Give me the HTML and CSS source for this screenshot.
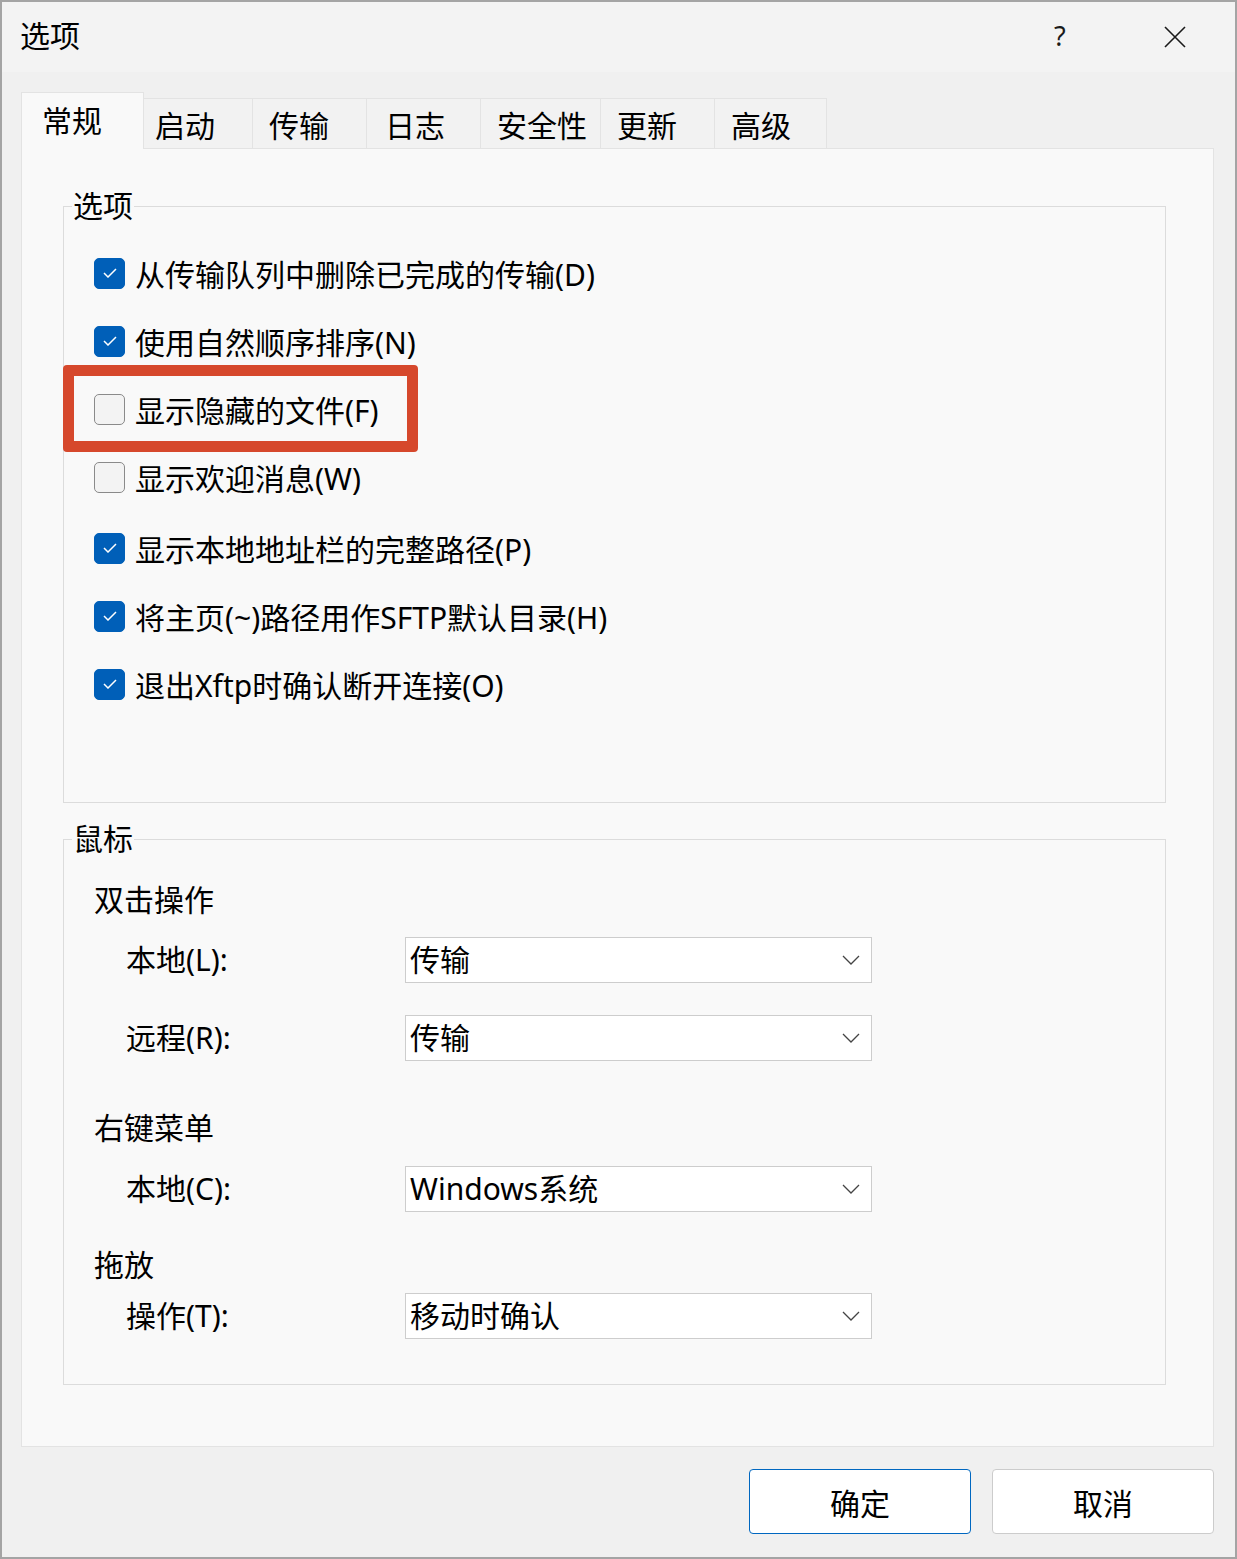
FILE: index.html
```html
<!DOCTYPE html>
<html lang="zh-CN">
<head>
<meta charset="utf-8">
<title>选项</title>
<link rel="stylesheet" href="styles.css">
</head>
<body>
<div class="window">
  <div class="titlebar">
    <span class="title">选项</span>
    <span class="help">?</span>
    <svg class="close" width="22" height="22" viewBox="0 0 22 22"><path d="M1 1L21 21M21 1L1 21" stroke="#1a1a1a" stroke-width="1.6" fill="none"/></svg>
  </div>
  <div class="content">
    <div class="tabs">
      <div class="tab active t1">常规</div>
      <div class="tab t2">启动</div>
      <div class="tab t3">传输</div>
      <div class="tab t4">日志</div>
      <div class="tab t5">安全性</div>
      <div class="tab t6">更新</div>
      <div class="tab t7">高级</div>
    </div>
    <div class="panel">
      <fieldset class="group options">
        <legend>选项</legend>
        <div class="row"><span class="cb on"><svg width="14" height="10" viewBox="0 0 14 10"><path d="M1 5L5 9L13 1" stroke="#fff" stroke-width="1.5" fill="none"/></svg></span><span>从传输队列中删除已完成的传输(D)</span></div>
        <div class="row"><span class="cb on"><svg width="14" height="10" viewBox="0 0 14 10"><path d="M1 5L5 9L13 1" stroke="#fff" stroke-width="1.5" fill="none"/></svg></span><span>使用自然顺序排序(N)</span></div>
        <div class="row marked"><span class="cb"></span><span>显示隐藏的文件(F)</span><div class="highlight"></div></div>
        <div class="row"><span class="cb"></span><span>显示欢迎消息(W)</span></div>
        <div class="row shift"><span class="cb on"><svg width="14" height="10" viewBox="0 0 14 10"><path d="M1 5L5 9L13 1" stroke="#fff" stroke-width="1.5" fill="none"/></svg></span><span>显示本地地址栏的完整路径(P)</span></div>
        <div class="row"><span class="cb on"><svg width="14" height="10" viewBox="0 0 14 10"><path d="M1 5L5 9L13 1" stroke="#fff" stroke-width="1.5" fill="none"/></svg></span><span>将主页(~)路径用作SFTP默认目录(H)</span></div>
        <div class="row"><span class="cb on"><svg width="14" height="10" viewBox="0 0 14 10"><path d="M1 5L5 9L13 1" stroke="#fff" stroke-width="1.5" fill="none"/></svg></span><span>退出Xftp时确认断开连接(O)</span></div>
      </fieldset>
      <fieldset class="group mouse">
        <legend>鼠标</legend>
        <div class="subhead h1">双击操作</div>
        <div class="field f1"><span class="label">本地(L):</span><div class="select"><span>传输</span><svg width="18" height="10" viewBox="0 0 18 10"><path d="M1 1L9 9L17 1" stroke="#444" stroke-width="1.3" fill="none"/></svg></div></div>
        <div class="field f2"><span class="label">远程(R):</span><div class="select"><span>传输</span><svg width="18" height="10" viewBox="0 0 18 10"><path d="M1 1L9 9L17 1" stroke="#444" stroke-width="1.3" fill="none"/></svg></div></div>
        <div class="subhead h2">右键菜单</div>
        <div class="field f3"><span class="label">本地(C):</span><div class="select"><span>Windows系统</span><svg width="18" height="10" viewBox="0 0 18 10"><path d="M1 1L9 9L17 1" stroke="#444" stroke-width="1.3" fill="none"/></svg></div></div>
        <div class="subhead h3">拖放</div>
        <div class="field f4"><span class="label">操作(T):</span><div class="select"><span>移动时确认</span><svg width="18" height="10" viewBox="0 0 18 10"><path d="M1 1L9 9L17 1" stroke="#444" stroke-width="1.3" fill="none"/></svg></div></div>
      </fieldset>
    </div>
    <div class="buttons">
      <button class="btn primary">确定</button>
      <button class="btn">取消</button>
    </div>
  </div>
</div>
</body>
</html>
```

FILE: styles.css
```css
html, body {
  margin: 0;
  padding: 0;
}
body {
  font-family: "Noto Sans", "Noto Sans CJK SC", sans-serif;
  font-size: 30px;
  color: #000;
  background: #ffffff;
}
.window {
  width: 1237px;
  height: 1559px;
  box-sizing: border-box;
  border: 2px solid #a4a4a4;
  background: #f0f0f0;
  display: flex;
  flex-direction: column;
}
.titlebar {
  height: 70px;
  background: #f3f3f3;
  display: flex;
  align-items: center;
  padding-left: 18px;
  flex-shrink: 0;
}
.title {
  line-height: 40px;
  margin-top: -2px;
  flex: 1;
}
.help {
  font-size: 27px;
  line-height: 30px;
  width: 24px;
  margin-right: 86px;
  margin-top: -2px;
  color: #1a1a1a;
}
.close {
  margin-right: 49px;
}
.content {
  padding: 20px 21px 0 19px;
  display: flex;
  flex-direction: column;
}
.tabs {
  display: flex;
  align-items: flex-end;
  height: 56px;
  position: relative;
  z-index: 2;
}
.tab {
  height: 50px;
  box-sizing: border-box;
  background: #f2f2f2;
  border: 1px solid #e3e3e3;
  border-bottom: none;
  border-left: none;
  padding-left: 16px;
  line-height: 54px;
}
.tab.active {
  height: 57px;
  margin-bottom: -1px;
  background: #f9f9f9;
  border-left: 1px solid #e3e3e3;
  line-height: 56px;
  padding-left: 20px;
}
.t1 { width: 123px; }
.t2 { width: 109px; padding-left: 11px; }
.t3 { width: 114px; }
.t4 { width: 114px; padding-left: 18px; }
.t5 { width: 120px; }
.t6 { width: 114px; }
.t7 { width: 112px; }
.panel {
  width: 1193px;
  height: 1299px;
  box-sizing: border-box;
  background: #f9f9f9;
  border: 1px solid #e3e3e3;
  padding: 42px 47px 0 41px;
}
.group {
  margin: 0;
  border: 1px solid #dcdcdc;
  padding: 0 0 0 8px;
  min-width: 0;
}
.group legend {
  line-height: 30px;
  padding: 0 1px;
  margin: 0;
}
.options {
  padding-top: 18px;
  padding-bottom: 84px;
}
.row {
  height: 68px;
  display: flex;
  align-items: center;
  position: relative;
  padding-left: 22px;
}
.row.shift {
  margin-top: 3px;
}
.cb {
  width: 31px;
  height: 31px;
  box-sizing: border-box;
  border-radius: 5px;
  border: 1px solid #8a8a8a;
  background: #f3f3f3;
  margin-right: 10px;
  display: flex;
  align-items: center;
  justify-content: center;
  flex-shrink: 0;
}
.cb.on {
  background: #005fb8;
  border-color: #005fb8;
}
.highlight {
  position: absolute;
  left: -9px;
  top: -10px;
  width: 355px;
  height: 87px;
  box-sizing: border-box;
  border: 11px solid #d6482c;
  border-radius: 4px;
}
.mouse {
  margin-top: 21px;
  padding-top: 26px;
  padding-bottom: 45px;
}
.subhead {
  line-height: 40px;
  padding-left: 22px;
}
.field {
  display: flex;
  align-items: center;
  padding-left: 54px;
}
.label {
  width: 279px;
  line-height: 46px;
}
.select {
  width: 467px;
  height: 46px;
  box-sizing: border-box;
  background: #fff;
  border: 1px solid #cdcdcd;
  display: flex;
  align-items: center;
  justify-content: space-between;
  padding: 0 11px 0 4px;
  line-height: 44px;
}
.f1 { margin-top: 17px; }
.f2 { margin-top: 32px; }
.h2 { margin-top: 47px; }
.f3 { margin-top: 18px; }
.h3 { margin-top: 33px; }
.f4 { margin-top: 8px; }
.buttons {
  display: flex;
  justify-content: flex-end;
  gap: 21px;
  margin-top: 22px;
}
.btn {
  width: 222px;
  height: 65px;
  font-family: "Noto Sans", "Noto Sans CJK SC", sans-serif;
  font-size: 30px;
  color: #000;
  background: #fff;
  border: 1px solid #cccccc;
  border-radius: 4px;
  padding: 0;
}
.btn.primary {
  border-color: #0067c0;
}
```
